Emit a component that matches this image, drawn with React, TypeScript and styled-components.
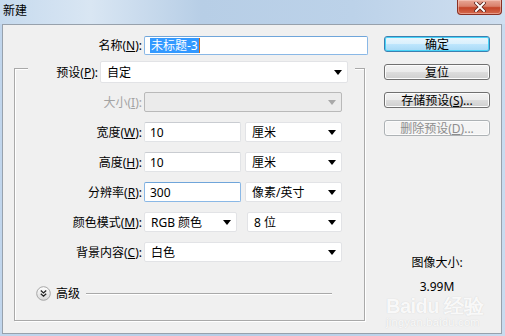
import styled, { createGlobalStyle } from 'styled-components'

const GlobalStyle = createGlobalStyle`
  html, body {
    margin: 0;
    padding: 0;
  }
  body {
    background: #c4d8ee;
    font-family: "Noto Sans", "Noto Sans CJK SC", sans-serif;
    font-size: 12px;
    color: #000;
  }
`

const Window = styled.div`
  position: relative;
  width: 505px;
  height: 336px;
  overflow: hidden;
  background: linear-gradient(90deg, #c0d5ec 0%, #b6cde6 45%, #bdd3ea 75%, #c8dbef 100%);
  display: flex;
  flex-direction: column;
`

const TitleBar = styled.div`
  height: 24px;
  display: flex;
  align-items: flex-start;
  justify-content: space-between;
  background: linear-gradient(90deg, #c6daee 0%, #d9e6f3 18%, #b7cee6 40%, #bcd2e9 70%, #cfdff0 100%);
`

const Title = styled.div`
  padding: 3px 0 0 3px;
  font-size: 12px;
  line-height: 16px;
  color: #000;
`

const CloseButton = styled.div`
  width: 45px;
  height: 15px;
  margin-right: 3px;
  box-sizing: border-box;
  border: 1px solid #8a3023;
  border-top: none;
  border-radius: 0 0 4px 4px;
  background: linear-gradient(180deg, #e8a796 0%, #d9806b 45%, #c44428 55%, #d56a4e 100%);
  box-shadow: inset 0 0 0 1px rgba(255, 220, 210, 0.45);
  display: flex;
  align-items: center;
  justify-content: center;
`

const Body = styled.div`
  margin-left: 2px;
  width: 500px;
  height: 310px;
  box-sizing: border-box;
  border: 1px solid #97a1ac;
  background: #f0f0f0;
  display: grid;
  grid-template-columns: 381px 106px;
`

const LeftCol = styled.div`
  padding-top: 10px;
  display: flex;
  flex-direction: column;
`

const RightCol = styled.div`
  padding-top: 11px;
  display: flex;
  flex-direction: column;
  align-items: stretch;
`

const Row = styled.div`
  display: flex;
  align-items: center;
  height: 20px;
`

const Label = styled.div<{ $w: number; $disabled?: boolean }>`
  width: ${(p) => p.$w}px;
  flex: none;
  box-sizing: border-box;
  padding-right: 2px;
  text-align: right;
  white-space: nowrap;
  color: ${(p) => (p.$disabled ? '#a3a3a3' : '#000')};
`

const Key = styled.span`
  text-decoration: underline;
  text-underline-offset: 1px;
`

const Field = styled.div<{ $w: number; $h?: number; $focus?: boolean }>`
  width: ${(p) => p.$w}px;
  height: ${(p) => p.$h ?? 20}px;
  box-sizing: border-box;
  padding-left: 5px;
  display: flex;
  align-items: center;
  background: #fff;
  border: 1px solid ${(p) => (p.$focus ? '#8ab8e6' : '#e1e3e6')};
  border-top-color: ${(p) => (p.$focus ? '#6fa5da' : '#c9ccd1')};
  border-radius: 2px;
  color: #000;
  white-space: nowrap;
`

const Selected = styled.span`
  background: #3399ff;
  color: #fff;
  line-height: 15px;
  padding: 0 1px;
`

const Caret = styled.span`
  width: 1px;
  height: 15px;
  background: #d26a1a;
`

const Combo = styled.div<{ $w: number; $h?: number; $disabled?: boolean; $ml?: number }>`
  width: ${(p) => p.$w}px;
  height: ${(p) => p.$h ?? 20}px;
  margin-left: ${(p) => p.$ml ?? 0}px;
  box-sizing: border-box;
  padding: 0 5px 0 6px;
  display: flex;
  align-items: center;
  background: ${(p) => (p.$disabled ? '#ebebeb' : '#fff')};
  border: 1px solid ${(p) => (p.$disabled ? '#b9b9b9' : '#e2e3e6')};
  border-radius: 2px;
  white-space: nowrap;
`

const ComboText = styled.span`
  flex: 1;
`

const Arrow = styled.span<{ $disabled?: boolean }>`
  width: 0;
  height: 0;
  border-left: 4px solid transparent;
  border-right: 4px solid transparent;
  border-top: 5px solid ${(p) => (p.$disabled ? '#a8a8a8' : '#000')};
`

const GroupBox = styled.div`
  margin: 13px 0 0 11px;
  width: 351px;
  height: 253px;
  box-sizing: border-box;
  border: 1px solid #a9a9a9;
  box-shadow: 1px 1px 0 #fff, inset 1px 1px 0 #fff;
  display: flex;
  flex-direction: column;
`

const Legend = styled.div`
  margin: -8px 9px 0 13px;
  padding-right: 7px;
  height: 22px;
  background: #f0f0f0;
  display: flex;
  align-items: center;
`

const Rows = styled.div`
  margin-top: 9px;
  display: flex;
  flex-direction: column;
  gap: 10px;
`

const Gap = styled.div<{ $w: number }>`
  width: ${(p) => p.$w}px;
  flex: none;
`

const AdvancedRow = styled.div`
  margin: 23px 0 0 21px;
  height: 16px;
  display: flex;
  align-items: center;
`

const AdvancedText = styled.span`
  margin-left: 5px;
`

const Rule = styled.div`
  margin-left: 6px;
  width: 246px;
  height: 1px;
  background: #a9a9a9;
  box-shadow: 0 1px 0 #fff;
`

const Button = styled.div<{ $primary?: boolean; $disabled?: boolean }>`
  height: 16px;
  box-sizing: border-box;
  display: flex;
  align-items: center;
  justify-content: center;
  border-radius: 3px;
  font-size: 12px;
  color: ${(p) => (p.$disabled ? '#8d8d8d' : '#000')};
  border: 1px solid ${(p) => (p.$primary ? '#3c7fb1' : p.$disabled ? '#adb2b5' : '#707070')};
  background: ${(p) =>
    p.$disabled
      ? '#f4f4f4'
      : p.$primary
        ? 'linear-gradient(180deg, #eaf6fd 0%, #d9f0fc 50%, #bee6fd 51%, #a7d9f5 100%)'
        : 'linear-gradient(180deg, #f2f2f2 0%, #ebebeb 50%, #dddddd 51%, #cfcfcf 100%)'};
  box-shadow: ${(p) => (p.$primary ? 'inset 0 0 0 1px #48d4f7' : 'inset 0 0 0 1px #fcfcfc')};
  & + & {
    margin-top: 12px;
  }
`

const InfoTitle = styled.div`
  margin-top: 119px;
  line-height: 16px;
  text-align: center;
`

const InfoValue = styled.div`
  margin-top: 8px;
  line-height: 16px;
  text-align: center;
`

/* faint site watermark laid over the dialog corner */
const Watermark = styled.div`
  position: absolute;
  left: 386px;
  top: 297px;
  color: rgba(255, 255, 255, 0.9);
  text-shadow: 0 0 1px rgba(160, 160, 160, 0.45);
  pointer-events: none;
`

const WatermarkLogo = styled.div`
  font-family: "Liberation Sans", sans-serif;
  font-size: 20px;
  font-weight: bold;
  line-height: 19px;
  letter-spacing: -0.5px;
`

const WatermarkUrl = styled.div`
  font-family: "Liberation Sans", sans-serif;
  font-size: 11px;
  line-height: 13px;
  letter-spacing: 0.3px;
`

function CloseGlyph() {
  return (
    <svg width="12" height="10" viewBox="0 0 12 10">
      <path d="M2 1 L10 9 M10 1 L2 9" stroke="#5a2019" strokeWidth="3.6" strokeLinecap="square" />
      <path d="M2 1 L10 9 M10 1 L2 9" stroke="#ffffff" strokeWidth="2" strokeLinecap="square" />
    </svg>
  )
}

function ExpandIcon() {
  return (
    <svg width="15" height="15" viewBox="0 0 15 15">
      <defs>
        <linearGradient id="adv" x1="0" y1="0" x2="0" y2="1">
          <stop offset="0" stopColor="#ffffff" />
          <stop offset="1" stopColor="#d8d8d8" />
        </linearGradient>
      </defs>
      <circle cx="7.5" cy="7.5" r="6.8" fill="url(#adv)" stroke="#a5a5a5" />
      <path d="M4.8 4.6 L7.5 7 L10.2 4.6 M4.8 7.8 L7.5 10.2 L10.2 7.8" fill="none" stroke="#222" strokeWidth="1.3" />
    </svg>
  )
}

export default function App() {
  return (
    <>
      <GlobalStyle />
      <Window>
        <TitleBar>
          <Title>新建</Title>
          <CloseButton>
            <CloseGlyph />
          </CloseButton>
        </TitleBar>
        <Body>
          <LeftCol>
            <Row>
              <Label $w={141}>
                名称(<Key>N</Key>):
              </Label>
              <Field $w={224} $h={19} $focus>
                <Selected>未标题-3</Selected>
                <Caret />
              </Field>
            </Row>
            <GroupBox>
              <Legend>
                <Label $w={72}>
                  预设(<Key>P</Key>):
                </Label>
                <Combo $w={248} $h={22}>
                  <ComboText>自定</ComboText>
                  <Arrow />
                </Combo>
              </Legend>
              <Rows>
                <Row>
                  <Label $w={129} $disabled>
                    大小(<Key>I</Key>):
                  </Label>
                  <Combo $w={198} $disabled>
                    <ComboText />
                    <Arrow $disabled />
                  </Combo>
                </Row>
                <Row>
                  <Label $w={129}>
                    宽度(<Key>W</Key>):
                  </Label>
                  <Field $w={97}>10</Field>
                  <Combo $w={97} $ml={4}>
                    <ComboText>厘米</ComboText>
                    <Arrow />
                  </Combo>
                </Row>
                <Row>
                  <Label $w={129}>
                    高度(<Key>H</Key>):
                  </Label>
                  <Field $w={97}>10</Field>
                  <Combo $w={97} $ml={4}>
                    <ComboText>厘米</ComboText>
                    <Arrow />
                  </Combo>
                </Row>
                <Row>
                  <Label $w={129}>
                    分辨率(<Key>R</Key>):
                  </Label>
                  <Field $w={97} $focus>300</Field>
                  <Combo $w={97} $ml={4}>
                    <ComboText>像素/英寸</ComboText>
                    <Arrow />
                  </Combo>
                </Row>
                <Row>
                  <Label $w={129}>
                    颜色模式(<Key>M</Key>):
                  </Label>
                  <Combo $w={93}>
                    <ComboText>RGB 颜色</ComboText>
                    <Arrow />
                  </Combo>
                  <Gap $w={10} />
                  <Combo $w={95}>
                    <ComboText>8 位</ComboText>
                    <Arrow />
                  </Combo>
                </Row>
                <Row>
                  <Label $w={129}>
                    背景内容(<Key>C</Key>):
                  </Label>
                  <Combo $w={198}>
                    <ComboText>白色</ComboText>
                    <Arrow />
                  </Combo>
                </Row>
              </Rows>
              <AdvancedRow>
                <ExpandIcon />
                <AdvancedText>高级</AdvancedText>
                <Rule />
              </AdvancedRow>
            </GroupBox>
          </LeftCol>
          <RightCol>
            <Button $primary>确定</Button>
            <Button>复位</Button>
            <Button>
              存储预设(<Key>S</Key>)...
            </Button>
            <Button $disabled>
              删除预设(<Key>D</Key>)...
            </Button>
            <InfoTitle>图像大小:</InfoTitle>
            <InfoValue>3.99M</InfoValue>
          </RightCol>
        </Body>
        <Watermark>
          <WatermarkLogo>Baidu 经验</WatermarkLogo>
          <WatermarkUrl>jingyan.baidu.com</WatermarkUrl>
        </Watermark>
      </Window>
    </>
  )
}
